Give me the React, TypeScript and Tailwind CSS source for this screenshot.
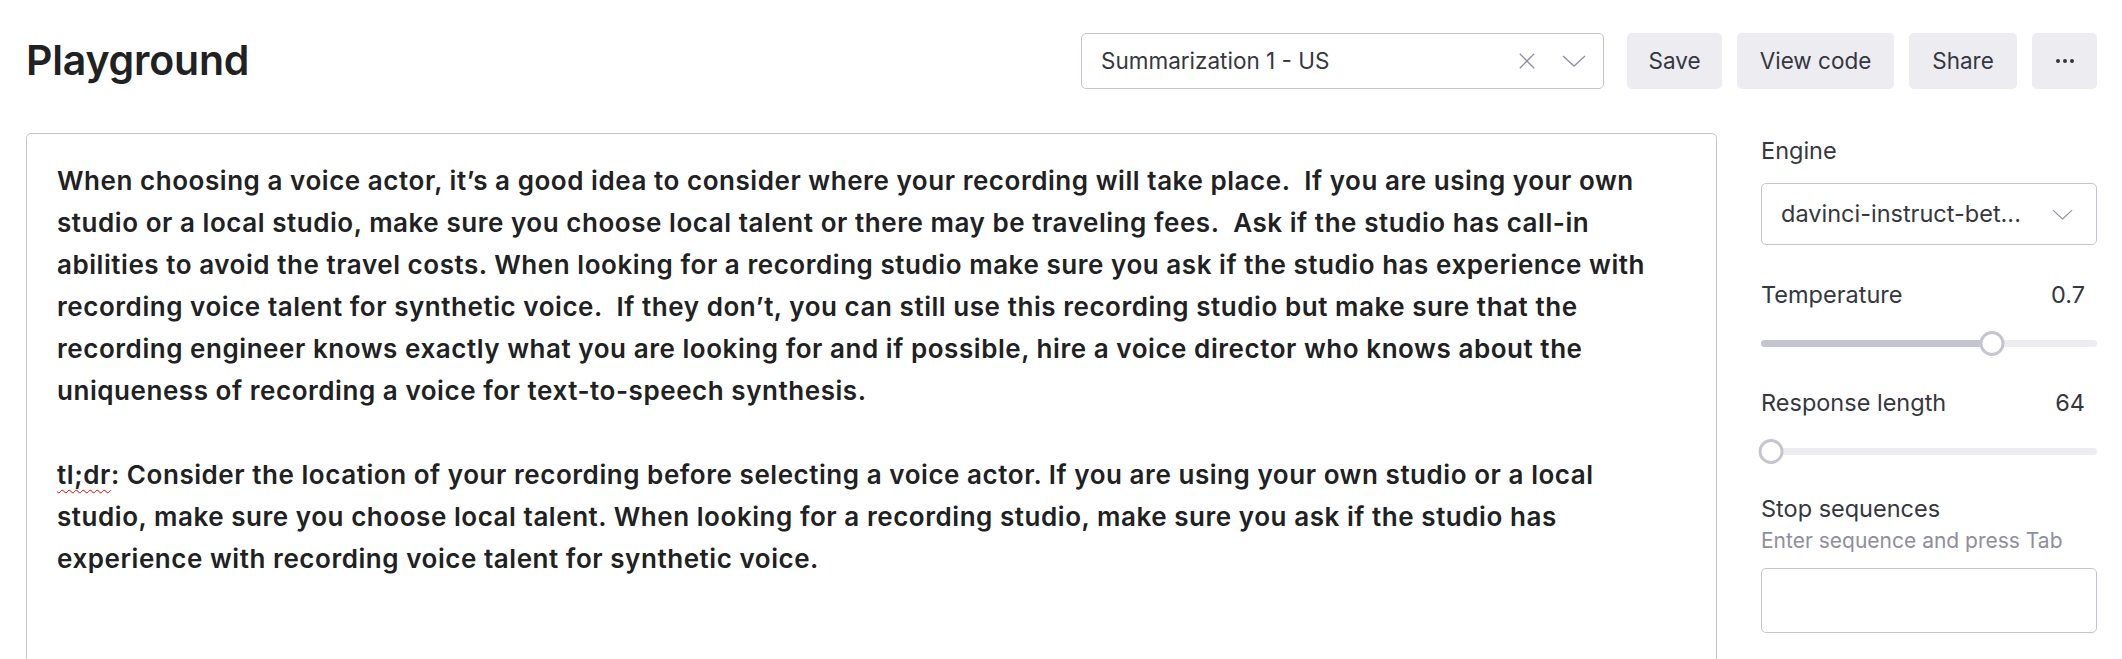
import { useState } from "react";

const bodyLines = [
    "When choosing a voice actor, it’s a good idea to consider where your recording will take place.  If you are using your own",
    "studio or a local studio, make sure you choose local talent or there may be traveling fees.  Ask if the studio has call-in",
    "abilities to avoid the travel costs. When looking for a recording studio make sure you ask if the studio has experience with",
    "recording voice talent for synthetic voice.  If they don’t, you can still use this recording studio but make sure that the",
    "recording engineer knows exactly what you are looking for and if possible, hire a voice director who knows about the",
    "uniqueness of recording a voice for text-to-speech synthesis.",
];

const summaryLines = [
    "studio, make sure you choose local talent. When looking for a recording studio, make sure you ask if the studio has",
    "experience with recording voice talent for synthetic voice.",
];

const Chevron = ({ className }: { className?: string }) => (
    <svg className={className} viewBox="0 0 24 12" fill="none" stroke="currentColor" strokeWidth="1.3">
        <path d="M1 1 L12 11 L23 1" />
    </svg>
);

const Slider = ({ value, max }: { value: number, max: number }) => {
    const pct = (value / max) * 100;
    return (
        <div className="relative h-[24px] flex items-center">
            <div className="w-full h-[7px] rounded-full bg-[#ececf1]">
                <div className="h-full rounded-full bg-[#c5c5d2]" style={{ width: `${pct}%` }} />
            </div>
            <div
                className="absolute w-[25px] h-[25px] rounded-full bg-white border-[3px] border-[#c5c5d2] -translate-x-1/2"
                style={{ left: `calc(10px + (100% - 20px) * ${pct / 100})` }}
            />
        </div>
    );
};

const App = () => {
    const [stop, setStop] = useState("");

    return (
        <div className="w-[2122px] h-[659px] overflow-hidden bg-white text-[#353740] font-['Inter',sans-serif]">
            {/* header */}
            <div className="flex items-center justify-between pl-[26px] pr-[25px] h-[126px] pb-[4px]">
                <h1 className="text-[41px] font-semibold text-[#202123] tracking-[-0.2px]">Playground</h1>
                <div className="flex items-center gap-[15px]">
                    <div className="w-[523px] h-[56px] mr-[8px] border border-[#c5c5d2] rounded-[5px] flex items-center pl-[19px] pr-[17px] text-[22.5px] text-[#353740]">
                        <span className="flex-1">Summarization 1 - US</span>
                        <svg className="w-[18px] h-[18px] text-[#8e8ea0] mr-[26px]" viewBox="0 0 20 20" stroke="currentColor" strokeWidth="1.4">
                            <path d="M2 2 L18 18 M18 2 L2 18" />
                        </svg>
                        <Chevron className="w-[24px] h-[12px] text-[#8e8ea0]" />
                    </div>
                    <button className="w-[95px] h-[56px] rounded-[5px] bg-[#ececf1] text-[22.5px]">Save</button>
                    <button className="w-[157px] h-[56px] rounded-[5px] bg-[#ececf1] text-[22.5px]">View code</button>
                    <button className="w-[108px] h-[56px] rounded-[5px] bg-[#ececf1] text-[22.5px]">Share</button>
                    <button className="w-[65px] h-[56px] rounded-[5px] bg-[#ececf1] flex items-center justify-center gap-[3px]">
                        <span className="w-[4px] h-[4px] rounded-full bg-[#353740]" />
                        <span className="w-[4px] h-[4px] rounded-full bg-[#353740]" />
                        <span className="w-[4px] h-[4px] rounded-full bg-[#353740]" />
                    </button>
                </div>
            </div>

            {/* main */}
            <div className="flex pl-[26px] pr-[25px] gap-[44px] mt-[7px]">
                <div className="flex-1 h-[600px] border border-[#c5c5d2] rounded-[5px] px-[30px] pt-[26px] text-[26px] tracking-[0.55px] leading-[42px] font-semibold text-[#202123] whitespace-pre">
                    {bodyLines.map((line, idx) => (
                        <div key={idx}>{line}</div>
                    ))}
                    <div>&nbsp;</div>
                    <div>
                        <span className="underline decoration-wavy decoration-[#e00] decoration-1 underline-offset-[5px]">tl;dr</span>
                        : Consider the location of your recording before selecting a voice actor. If you are using your own studio or a local
                    </div>
                    {summaryLines.map((line, idx) => (
                        <div key={idx}>{line}</div>
                    ))}
                </div>

                <div className="w-[336px] flex flex-col text-[23.5px] pt-[2px]">
                    <div className="h-[32px] flex items-center">Engine</div>
                    <div className="mt-[16px] h-[62px] border border-[#c5c5d2] rounded-[5px] flex items-center pl-[19px] pr-[23px]">
                        <span className="flex-1">davinci-instruct-bet...</span>
                        <Chevron className="w-[21px] h-[11px] text-[#8e8ea0]" />
                    </div>

                    <div className="mt-[34px] h-[32px] flex items-center justify-between pr-[12px]">
                        <span>Temperature</span>
                        <span>0.7</span>
                    </div>
                    <div className="mt-[20px]">
                        <Slider value={0.7} max={1} />
                    </div>

                    <div className="mt-[32px] h-[32px] flex items-center justify-between pr-[12px]">
                        <span>Response length</span>
                        <span>64</span>
                    </div>
                    <div className="mt-[20px]">
                        <Slider value={0} max={512} />
                    </div>

                    <div className="mt-[30px] h-[32px] flex items-center">Stop sequences</div>
                    <div className="text-[#8e8ea0] text-[21px] leading-[32px] whitespace-nowrap">Enter sequence and press Tab</div>
                    <input
                        value={stop}
                        onChange={(e) => setStop(e.target.value)}
                        className="mt-[11px] h-[65px] border border-[#c5c5d2] rounded-[5px] outline-none px-[19px]"
                    />
                </div>
            </div>
        </div>
    );
};

export default App;
